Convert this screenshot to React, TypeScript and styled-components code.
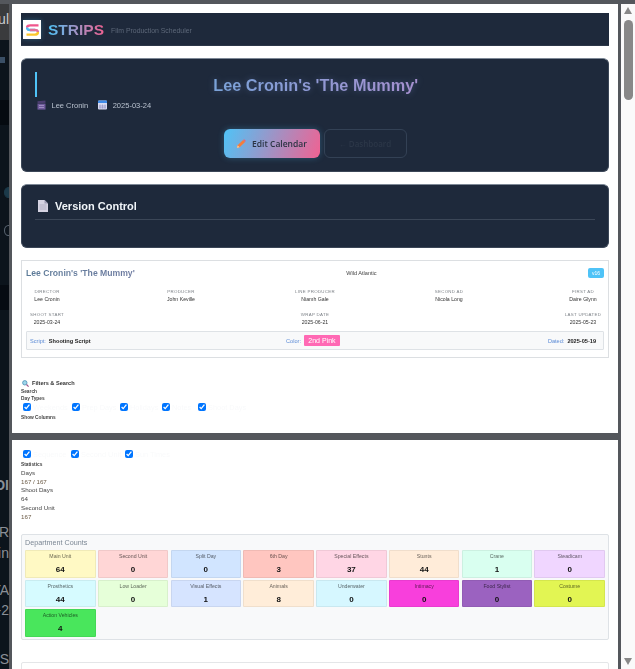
import React from "react";
import styled, { createGlobalStyle } from "styled-components";

const Global = createGlobalStyle`
  html, body { margin: 0; padding: 0; height: 669px; overflow: hidden; background: #54575c; }
  * { box-sizing: border-box; }
  body { font-family: "Liberation Sans", Arial, sans-serif; }
`;

const Stage = styled.div`
  display: flex;
  width: 635px;
  height: 669px;
  overflow: hidden;
`;

const Backdrop = styled.div`
  width: 9px;
  flex: none;
  display: flex;
  flex-direction: column;
  overflow: hidden;
  background: #0c141c;
`;

const BackRow = styled.div<{ $h: number; $bg?: string; $lift?: number; $bold?: boolean; $color?: string }>`
  height: ${p => p.$h}px;
  flex: none;
  display: flex;
  align-items: center;
  justify-content: flex-end;
  white-space: nowrap;
  font-size: 14px;
  padding-bottom: ${p => p.$lift ?? 0}px;
  font-weight: ${p => (p.$bold ? 700 : 400)};
  color: ${p => p.$color ?? "#8a8f96"};
  background: ${p => p.$bg ?? "#0c141c"};
`;

const BackDot = styled.span<{ $c: string; $fill?: boolean }>`
  width: 9px;
  height: 11px;
  border-radius: 50%;
  margin-right: -4px;
  border: 1px solid ${p => p.$c};
  background: ${p => (p.$fill ? p.$c : "transparent")};
  flex: none;
`;

const Modal = styled.div`
  flex: 1;
  min-width: 0;
  display: flex;
  flex-direction: column;
  gap: 7px;
  padding-top: 4px;
  border-left: 3px solid #54575c;
  border-right: 3px solid #54575c;
  background: linear-gradient(#3f4145, #54575c 3px);
  background-size: 100% 7px;
  background-position: 0 429px;
  background-repeat: no-repeat;
  background-color: #54575c;
`;

const Sheet = styled.section<{ $h?: number }>`
  background: #fff;
  padding: 9px;
  height: ${p => (p.$h ? `${p.$h}px` : "auto")};
  flex: ${p => (p.$h ? "none" : "1")};
  overflow: hidden;
  filter: blur(0.3px);
`;

const Scrollbar = styled.div`
  width: 14px;
  flex: none;
  margin-top: 4px;
  background: #fafafa;
  display: flex;
  flex-direction: column;
  align-items: center;
  padding-top: 3px;
`;

const Arrow = styled.div<{ $down?: boolean }>`
  width: 0;
  height: 0;
  border-left: 4.5px solid transparent;
  border-right: 4.5px solid transparent;
  ${p => (p.$down ? "border-top: 7px solid #888;" : "border-bottom: 7px solid #888;")}
  ${p => (p.$down ? "margin-top: auto; margin-bottom: 4px;" : "")}
`;

const Thumb = styled.div`
  width: 9px;
  height: 80px;
  margin-top: 6px;
  border-radius: 4.5px;
  background: #888;
`;

const Header = styled.header`
  height: 33px;
  background: #1e293b;
  display: flex;
  align-items: center;
  gap: 7px;
  padding-left: 2px;
  box-shadow: inset 0 -1px 0 #2c3748;
`;

const LogoBox = styled.div`
  width: 18px;
  height: 19px;
  background: #fff;
  box-shadow: 0 0 5px rgba(79, 195, 247, 0.3);
  display: flex;
  align-items: center;
  justify-content: center;
  flex: none;
`;

const Brand = styled.span`
  font-size: 15.5px;
  font-weight: 700;
  background: linear-gradient(90deg, #4fc3f7, #f06292);
  -webkit-background-clip: text;
  background-clip: text;
  color: transparent;
`;

const Tagline = styled.span`
  font-size: 6.9px;
  color: #5d6879;
  margin-top: 1px;
`;

const DarkCard = styled.div<{ $h: number }>`
  height: ${p => p.$h}px;
  margin-top: 12px;
  background: #1e293b;
  border: 1px solid #3b4657;
  border-top-color: #7d8896;
  border-radius: 6px;
  padding: 13px;
`;

const TitleRow = styled.div`
  display: flex;
  height: 25px;
`;

const AccentBar = styled.div`
  width: 1.5px;
  background: #4fc3f7;
  flex: none;
`;

const HeroTitle = styled.h1`
  flex: 1;
  margin: 0;
  text-align: center;
  font-size: 16.25px;
  line-height: 26px;
  font-weight: 700;
`;

const GradientText = styled.span`
  background: linear-gradient(90deg, #7aa2d8, #a690cf);
  -webkit-background-clip: text;
  background-clip: text;
  color: transparent;
  filter: drop-shadow(0 0 3px rgba(120, 150, 220, 0.35));
`;

const Meta = styled.div`
  display: flex;
  align-items: center;
  margin-top: 1px;
  padding-left: 2px;
  height: 14px;
`;

const MetaItem = styled.span`
  display: flex;
  align-items: center;
  gap: 5.5px;
  font-size: 7.5px;
  color: #b9c2cf;
  margin-right: 10px;
`;

const Buttons = styled.div`
  display: flex;
  justify-content: center;
  gap: 4px;
  margin-top: 17px;
`;

const PrimaryBtn = styled.div`
  width: 96px;
  height: 29px;
  border-radius: 6px;
  background: linear-gradient(110deg, #4fc3f7, #f06292);
  box-shadow: 0 0 6px rgba(79, 195, 247, 0.3);
  display: flex;
  align-items: center;
  justify-content: center;
  gap: 6px;
  font: 600 8.5px "Open Sans", sans-serif;
  color: #2a3342;
`;

const GhostBtn = styled.div`
  width: 83px;
  height: 29px;
  border-radius: 6px;
  border: 1px solid #334155;
  display: flex;
  align-items: center;
  justify-content: center;
  font: 600 8px "Open Sans", sans-serif;
  color: #2c3748;
`;

const VersionHead = styled.div`
  display: flex;
  align-items: center;
  gap: 7px;
  height: 22px;
  padding: 0 0 5px 3px;
  border-bottom: 1px solid #3b4657;
`;

const VersionTitle = styled.h2`
  margin: 0;
  font-size: 11px;
  font-weight: 700;
  color: #f1f5f9;
`;

const InfoCard = styled.div`
  height: 98px;
  margin-top: 12px;
  border: 1px solid #dcdfe2;
  padding: 0 4px;
`;

const InfoTop = styled.div`
  display: flex;
  justify-content: space-between;
  align-items: center;
  height: 23px;
`;

const InfoTitle = styled.h3`
  margin: 0;
  font-size: 8.65px;
  font-weight: 700;
  white-space: nowrap;
  background: linear-gradient(90deg, #5b7a97, #6d7aa0);
  -webkit-background-clip: text;
  background-clip: text;
  color: transparent;
`;

const Studio = styled.span`
  font-size: 5.6px;
  color: #444;
`;

const VersionBadge = styled.span`
  width: 16px;
  height: 10px;
  border-radius: 2px;
  background: #4fc3f7;
  color: #fff;
  font-size: 5px;
  display: flex;
  align-items: center;
  justify-content: center;
`;

const Credits = styled.div<{ $top: number }>`
  display: flex;
  justify-content: space-between;
  margin: ${p => p.$top}px -4px 0;
`;

const Credit = styled.div`
  width: 50px;
  text-align: center;
  white-space: nowrap;
  display: flex;
  flex-direction: column;
  align-items: center;
  gap: 2px;
`;

const CreditLabel = styled.span`
  font-size: 4.4px;
  line-height: 5px;
  letter-spacing: 0.3px;
  color: #7d8288;
`;

const CreditValue = styled.span`
  font-size: 5.2px;
  line-height: 6px;
  color: #333;
`;

const ScriptBar = styled.div`
  margin-top: 6px;
  height: 19px;
  background: #f8f9fa;
  border: 1px solid #dee2e6;
  border-radius: 1px;
  display: grid;
  grid-template-columns: 1fr auto 1fr;
  align-items: center;
  padding: 0 7px 0 3px;
`;

const ScriptPart = styled.div<{ $end?: boolean }>`
  display: flex;
  align-items: center;
  gap: 3px;
  font-size: 5.6px;
  ${p => (p.$end ? "justify-content: flex-end;" : "")}
`;

const ScriptLabel = styled.span`
  color: #5b8bd6;
`;

const ScriptValue = styled.span`
  color: #222;
  font-weight: 700;
`;

const ColorChip = styled.span`
  width: 36px;
  height: 11.5px;
  background: #ff69b4;
  color: #fff;
  font-size: 7px;
  border-radius: 1px;
  display: flex;
  align-items: center;
  justify-content: center;
  white-space: nowrap;
`;

const FiltersTitle = styled.div`
  display: flex;
  align-items: center;
  gap: 3px;
  margin-top: 21px;
  margin-bottom: 2px;
  height: 8px;
  padding-left: 1px;
  font-size: 5.6px;
  font-weight: 700;
  color: #333;
`;

const SmallHead = styled.div<{ $top?: number }>`
  font-size: 4.8px;
  line-height: 6px;
  font-weight: 700;
  color: #444;
  margin-top: ${p => p.$top ?? 1}px;
`;

const Checks = styled.div<{ $top?: number }>`
  display: flex;
  align-items: center;
  height: 12px;
  margin-top: ${p => p.$top ?? 0}px;
  padding-left: 2px;
`;

const CheckItem = styled.label<{ $w: number }>`
  width: ${p => p.$w}px;
  flex: none;
  display: flex;
  align-items: center;
  gap: 2px;
  font-size: 7.4px;
  color: #f9fafb;
  white-space: nowrap;
`;

const Box = styled.input`
  width: 8px;
  height: 8px;
  margin: 0;
  flex: none;
  accent-color: #0075ff;
`;

const StatLabel = styled.div<{ $top?: number }>`
  font-size: 6.2px;
  line-height: 8.7px;
  color: #444;
  margin-top: ${p => p.$top ?? 0}px;
`;

const StatValue = styled(StatLabel)<{ $tint?: string }>`
  color: ${p => p.$tint ?? "#444"};
`;

const DeptBox = styled.div`
  height: 106px;
  margin-top: 13px;
  background: #f8f9fa;
  border: 1px solid #dee2e6;
  border-radius: 2px;
  padding: 2px 3px 0;
`;

const DeptTitle = styled.div`
  font-size: 7.2px;
  line-height: 11px;
  color: #7b8794;
  margin-bottom: 2px;
`;

const DeptGrid = styled.div`
  display: grid;
  grid-template-columns: repeat(8, 1fr);
  grid-auto-rows: 27.5px;
  gap: 2px 2.2px;
`;

const DeptCell = styled.div<{ $bg: string }>`
  background: ${p => p.$bg};
  border: 1px solid rgba(0, 0, 0, 0.06);
  border-radius: 1px;
  display: flex;
  flex-direction: column;
  align-items: center;
  padding-top: 2px;
  white-space: nowrap;
`;

const DeptName = styled.span`
  font-size: 5.2px;
  line-height: 7px;
  color: rgba(0, 0, 0, 0.62);
`;

const DeptCount = styled.span`
  margin-top: 5px;
  font-size: 8px;
  line-height: 9px;
  font-weight: 700;
  color: #111;
`;

const NextBox = styled.div`
  height: 30px;
  margin-top: 22px;
  border: 1px solid #e4e6e8;
  border-radius: 2px;
`;

const Logo = () => (
  <svg width="13" height="12" viewBox="0 0 13 12">
    <path d="M12.5 1.4H4.2C2 1.4 1 2.6 1 3.8" fill="none" stroke="#f0568c" strokeWidth="2.4" />
    <path d="M1 3.6C1 5 2 6 4 6h5" fill="none" stroke="#4fb8f0" strokeWidth="2.4" />
    <path d="M4 6h5c2 0 3 1 3 2.2" fill="none" stroke="#e0709a" strokeWidth="2.4" />
    <path d="M.5 10.6h8.3c2.2 0 3.2-1 3.2-2.6" fill="none" stroke="#fbc82d" strokeWidth="2.4" />
  </svg>
);

const Clapper = () => (
  <svg width="9" height="10" viewBox="0 0 9 10">
    <rect x="0.5" y="3.6" width="8" height="6" fill="#6f5a9c" />
    <rect x="0.5" y="1" width="8" height="2.2" fill="#4b3d70" transform="rotate(-6 4 2)" />
    <path d="M2 5.5h5M2 7.5h5" stroke="#a99bc9" strokeWidth="0.8" />
  </svg>
);

const CalendarIcon = () => (
  <svg width="9" height="10" viewBox="0 0 9 10">
    <rect x="0" y="0.5" width="9" height="9" rx="1" fill="#d9dcf2" />
    <path d="M0 1.5a1 1 0 0 1 1-1h7a1 1 0 0 1 1 1V3H0z" fill="#3f8be8" />
    <path d="M2 4.5v4M4.5 4.5v4M7 4.5v4M1 6h7M1 7.8h7" stroke="#8f8fc0" strokeWidth="0.6" />
  </svg>
);

const Pencil = () => (
  <svg width="10" height="10" viewBox="0 0 11 11">
    <path d="M1 10 1.8 7 7.8 1l2.2 2.2-6 6z" fill="#f57c3c" />
    <path d="M7.8 1 9 0.2l1.8 1.8L10 3.2z" fill="#e8637a" />
    <path d="M1 10l.8-3 2.2 2.2z" fill="#f5cfa0" />
  </svg>
);

const FileIcon = () => (
  <svg width="10" height="12" viewBox="0 0 10 12">
    <path d="M0 0h6.5L10 3.5V12H0z" fill="#d5d3e2" />
    <path d="M6.5 0v3.5H10z" fill="#9d9bb3" />
    <path d="M1.5 5h7M1.5 7h7M1.5 9h7" stroke="#a9a7bd" strokeWidth="0.8" />
  </svg>
);

const Magnifier = () => (
  <svg width="7" height="7" viewBox="0 0 7 7">
    <circle cx="2.8" cy="2.8" r="2.2" fill="#9fd6ea" stroke="#4a90b8" strokeWidth="0.8" />
    <path d="M4.5 4.5 6.6 6.6" stroke="#a0558a" strokeWidth="1.2" />
  </svg>
);

const depts: [string, number, string][] = [
  ["Main Unit", 64, "#fff9c4"],
  ["Second Unit", 0, "#ffd6d6"],
  ["Split Day", 0, "#d1e5ff"],
  ["6th Day", 3, "#ffc6c0"],
  ["Special Effects", 37, "#ffd6e5"],
  ["Stunts", 44, "#ffecd9"],
  ["Crane", 1, "#d9fff0"],
  ["Steadicam", 0, "#f0d6ff"],
  ["Prosthetics", 44, "#d6fbff"],
  ["Low Loader", 0, "#e6ffd9"],
  ["Visual Effects", 1, "#d6e4ff"],
  ["Animals", 8, "#ffedd9"],
  ["Underwater", 0, "#d6f7ff"],
  ["Intimacy", 0, "#f83fdc"],
  ["Food Stylist", 0, "#9b62c0"],
  ["Costume", 0, "#e2f553"],
  ["Action Vehicles", 4, "#49e65c"],
];

const dayTypes: [string, number][] = [
  ["Weekends", 49],
  ["Prep Days", 48],
  ["Holidays", 42],
  ["Notes", 36],
  ["Shoot Days", 60],
];

const columns: [string, number][] = [
  ["Sequence", 48],
  ["Second Unit", 54],
  ["Sun Times", 60],
];

export default function App() {
  return (
    <Stage>
      <Global />
      <Backdrop>
        <BackRow $h={4} $bg="#54575c" />
        <BackRow $h={36} $bg="#3a3b3d" $color="#c9ccd0" $lift={6}>ul</BackRow>
        <BackRow $h={17} />
        <BackRow $h={6} $bg="linear-gradient(90deg, #3a4f66 5px, #0c141c 5px)" />
        <BackRow $h={37} />
        <BackRow $h={25} $bg="#050a10" />
        <BackRow $h={60} />
        <BackRow $h={15}><BackDot $c="#1c3a4a" $fill /></BackRow>
        <BackRow $h={25} />
        <BackRow $h={11}><BackDot $c="#5b6672" /></BackRow>
        <BackRow $h={49} />
        <BackRow $h={25} $bg="#060b12" />
        <BackRow $h={157} />
        <BackRow $h={35} $bold>OI</BackRow>
        <BackRow $h={20} />
        <BackRow $h={20}>R</BackRow>
        <BackRow $h={22}>in</BackRow>
        <BackRow $h={14} />
        <BackRow $h={24}>TA</BackRow>
        <BackRow $h={16}>-2</BackRow>
        <BackRow $h={30} />
        <BackRow $h={22}>S</BackRow>
      </Backdrop>
      <Modal>
        <Sheet $h={429}>
          <Header>
            <LogoBox><Logo /></LogoBox>
            <Brand>STRIPS</Brand>
            <Tagline>Film Production Scheduler</Tagline>
          </Header>
          <DarkCard $h={114}>
            <TitleRow>
              <AccentBar />
              <HeroTitle><GradientText>Lee Cronin's 'The Mummy'</GradientText></HeroTitle>
            </TitleRow>
            <Meta>
              <MetaItem><Clapper />Lee Cronin</MetaItem>
              <MetaItem><CalendarIcon />2025-03-24</MetaItem>
            </Meta>
            <Buttons>
              <PrimaryBtn><Pencil />Edit Calendar</PrimaryBtn>
              <GhostBtn>← Dashboard</GhostBtn>
            </Buttons>
          </DarkCard>
          <DarkCard $h={64}>
            <VersionHead>
              <FileIcon />
              <VersionTitle>Version Control</VersionTitle>
            </VersionHead>
          </DarkCard>
          <InfoCard>
            <InfoTop>
              <InfoTitle>Lee Cronin's 'The Mummy'</InfoTitle>
              <Studio>Wild Atlantic</Studio>
              <VersionBadge>v16</VersionBadge>
            </InfoTop>
            <Credits $top={5}>
              <Credit><CreditLabel>DIRECTOR</CreditLabel><CreditValue>Lee Cronin</CreditValue></Credit>
              <Credit><CreditLabel>PRODUCER</CreditLabel><CreditValue>John Keville</CreditValue></Credit>
              <Credit><CreditLabel>LINE PRODUCER</CreditLabel><CreditValue>Niamh Gale</CreditValue></Credit>
              <Credit><CreditLabel>SECOND AD</CreditLabel><CreditValue>Nicola Long</CreditValue></Credit>
              <Credit><CreditLabel>FIRST AD</CreditLabel><CreditValue>Daire Glynn</CreditValue></Credit>
            </Credits>
            <Credits $top={10}>
              <Credit><CreditLabel>SHOOT START</CreditLabel><CreditValue>2025-03-24</CreditValue></Credit>
              <Credit><CreditLabel>WRAP DATE</CreditLabel><CreditValue>2025-06-21</CreditValue></Credit>
              <Credit><CreditLabel>LAST UPDATED</CreditLabel><CreditValue>2025-05-23</CreditValue></Credit>
            </Credits>
            <ScriptBar>
              <ScriptPart><ScriptLabel>Script:</ScriptLabel><ScriptValue>Shooting Script</ScriptValue></ScriptPart>
              <ScriptPart><ScriptLabel>Color:</ScriptLabel><ColorChip>2nd Pink</ColorChip></ScriptPart>
              <ScriptPart $end><ScriptLabel>Dated:</ScriptLabel><ScriptValue>2025-05-19</ScriptValue></ScriptPart>
            </ScriptBar>
          </InfoCard>
          <FiltersTitle><Magnifier />Filters &amp; Search</FiltersTitle>
          <SmallHead $top={0}>Search</SmallHead>
          <SmallHead>Day Types</SmallHead>
          <Checks $top={-1}>
            {dayTypes.map(([n, w]) => (
              <CheckItem key={n} $w={w}><Box type="checkbox" defaultChecked />{n}</CheckItem>
            ))}
          </Checks>
          <SmallHead $top={2}>Show Columns</SmallHead>
        </Sheet>
        <Sheet>
          <Checks $top={-1}>
            {columns.map(([n, w]) => (
              <CheckItem key={n} $w={w}><Box type="checkbox" defaultChecked />{n}</CheckItem>
            ))}
          </Checks>
          <SmallHead $top={2}>Statistics</SmallHead>
          <StatLabel $top={1}>Days</StatLabel>
          <StatValue $tint="#6b5a45">167 / 167</StatValue>
          <StatLabel>Shoot Days</StatLabel>
          <StatValue>64</StatValue>
          <StatLabel>Second Unit</StatLabel>
          <StatValue $tint="#6b5a45">167</StatValue>
          <DeptBox>
            <DeptTitle>Department Counts</DeptTitle>
            <DeptGrid>
              {depts.map(([n, c, bg]) => (
                <DeptCell key={n} $bg={bg}>
                  <DeptName>{n}</DeptName>
                  <DeptCount>{c}</DeptCount>
                </DeptCell>
              ))}
            </DeptGrid>
          </DeptBox>
          <NextBox />
        </Sheet>
      </Modal>
      <Scrollbar>
        <Arrow />
        <Thumb />
        <Arrow $down />
      </Scrollbar>
    </Stage>
  );
}
